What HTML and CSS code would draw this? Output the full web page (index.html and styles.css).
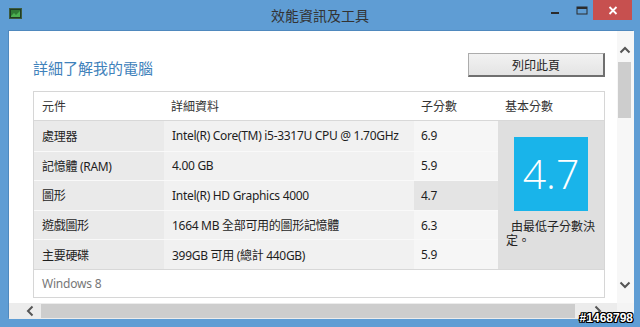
FILE: index.html
```html
<!DOCTYPE html>
<html lang="zh-Hant">
<head>
<meta charset="utf-8">
<title>效能資訊及工具</title>
<link rel="stylesheet" href="styles.css">
</head>
<body>
<div class="window">
  <header class="titlebar">
    <div class="app-icon">
      <svg width="13" height="11" viewBox="0 0 13 11"><rect x="0.5" y="0.5" width="12" height="10" fill="#1f3d23" stroke="#3c5a3e"/><rect x="2" y="2" width="9" height="7" fill="#2f7a34"/><path d="M2 8 L5 5 L7 7 L11 3 L11 9 L2 9 Z" fill="#4caf50"/></svg>
    </div>
    <div class="title">效能資訊及工具</div>
    <div class="controls">
      <div class="ctl ctl-min"><svg width="10" height="4" viewBox="0 0 10 4"><rect x="1" y="1" width="8" height="2" fill="#2b2b2b"/></svg></div>
      <div class="ctl ctl-max"><svg width="12" height="9" viewBox="0 0 12 9"><rect x="1" y="1" width="10" height="7" fill="none" stroke="#2b2b2b" stroke-width="1"/><rect x="1" y="1" width="10" height="2" fill="#2b2b2b"/></svg></div>
      <div class="ctl ctl-close"><svg width="10" height="9" viewBox="0 0 10 9"><path d="M1.5 1 L8.5 8 M8.5 1 L1.5 8" stroke="#fff" stroke-width="1.8"/></svg></div>
    </div>
  </header>
  <div class="client">
    <main class="page">
      <div class="page-head">
        <h1 class="heading">詳細了解我的電腦</h1>
        <button class="print-btn" type="button">列印此頁</button>
      </div>
      <section class="score-table">
        <div class="thead">
          <div class="th">元件</div>
          <div class="th">詳細資料</div>
          <div class="th">子分數</div>
          <div class="th">基本分數</div>
        </div>
        <div class="tbody">
          <div class="c1 r1">處理器</div>
          <div class="c2 r1">Intel(R) Core(TM) i5-3317U CPU @ 1.70GHz</div>
          <div class="c3 r1">6.9</div>
          <div class="c1 r2">記憶體 (RAM)</div>
          <div class="c2 r2">4.00 GB</div>
          <div class="c3 r2">5.9</div>
          <div class="c1 r3">圖形</div>
          <div class="c2 r3">Intel(R) HD Graphics 4000</div>
          <div class="c3 r3 lowest">4.7</div>
          <div class="c1 r4">遊戲圖形</div>
          <div class="c2 r4">1664 MB 全部可用的圖形記憶體</div>
          <div class="c3 r4">6.3</div>
          <div class="c1 r5">主要硬碟</div>
          <div class="c2 r5">399GB 可用 (總計 440GB)</div>
          <div class="c3 r5">5.9</div>
          <div class="base">
            <div class="base-score">4.7</div>
            <p class="base-note">由最低子分數決定。</p>
          </div>
        </div>
        <div class="tfoot">Windows 8</div>
      </section>
    </main>
    <div class="vscroll">
      <svg class="arrow-up" width="12" height="8" viewBox="0 0 12 8"><path d="M1.5 6.5 L6 2 L10.5 6.5" fill="none" stroke="#555" stroke-width="2"/></svg>
      <div class="vthumb"></div>
      <div class="vtrack"></div>
      <svg class="arrow-down" width="12" height="8" viewBox="0 0 12 8"><path d="M1.5 1.5 L6 6 L10.5 1.5" fill="none" stroke="#555" stroke-width="2"/></svg>
    </div>
    <div class="hscroll">
      <svg class="arrow-left" width="8" height="12" viewBox="0 0 8 12"><path d="M6.5 1.5 L2 6 L6.5 10.5" fill="none" stroke="#555" stroke-width="2"/></svg>
      <div class="hthumb"></div>
      <svg class="arrow-right" width="8" height="12" viewBox="0 0 8 12"><path d="M1.5 1.5 L6 6 L1.5 10.5" fill="none" stroke="#555" stroke-width="2"/></svg>
    </div>
    <div class="corner"></div>
  </div>
</div>
<div class="watermark">#1468798</div>
</body>
</html>
```

FILE: styles.css
```css
* { box-sizing: border-box; }
html, body { margin: 0; padding: 0; }
body {
  width: 640px;
  height: 327px;
  overflow: hidden;
  background: #5f9dd4;
  font-family: "Noto Sans", "Noto Sans CJK TC", sans-serif;
  font-size: 12px;
  color: #222;
  position: relative;
}
.window {
  display: flex;
  flex-direction: column;
  height: 327px;
}
.titlebar {
  height: 30px;
  display: grid;
  grid-template-columns: 1fr auto 1fr;
  align-items: start;
}
.app-icon {
  padding: 8px 0 0 9px;
  line-height: 0;
}
.title {
  font-family: "Noto Sans CJK TC", sans-serif;
  font-size: 14px;
  line-height: 30px;
  color: #333;
}
.controls {
  display: flex;
  justify-content: flex-end;
  padding-right: 8px;
}
.ctl {
  height: 20px;
  display: flex;
  align-items: center;
  justify-content: center;
}
.ctl-min { width: 30px; padding-top: 6px; }
.ctl-max { width: 23px; }
.ctl-close { width: 39px; background: #c7504f; }

.client {
  margin: 0 7px 0 8px;
  height: 288px;
  background: #fff;
  display: grid;
  grid-template-columns: 608px 17px;
  grid-template-rows: 272px 16px;
  border-left: 1px solid #4f89be;
  border-top: 1px solid #4f89be;
}
.page {
  padding: 22px 12px 0 24px;
  overflow: hidden;
}
.page-head {
  display: flex;
  justify-content: space-between;
  align-items: flex-start;
  height: 24px;
  margin-bottom: 14px;
}
.heading {
  margin: 5px 0 0 0;
  font-family: "Noto Sans CJK TC", sans-serif;
  font-weight: 400;
  font-size: 15px;
  line-height: 20px;
  color: #3f82bb;
}
.print-btn {
  width: 137px;
  height: 24px;
  font-family: "Noto Sans CJK TC", sans-serif;
  font-size: 12px;
  color: #222;
  background: linear-gradient(#f2f2f2, #e4e4e4);
  border: 1px solid #acacac;
  border-right: 2px solid #6f6f6f;
  border-bottom: 2px solid #6f6f6f;
  padding: 0;
}

.score-table {
  width: 572px;
  border: 1px solid #d6d6d6;
}
.thead {
  display: grid;
  grid-template-columns: 130px 250px 84px 1fr;
  height: 29px;
  border-bottom: 1px solid #d8d8d8;
  background: #fff;
}
.th {
  padding-left: 7px;
  line-height: 28px;
  color: #333;
  font-family: "Noto Sans CJK TC", sans-serif;
}
.th:first-child { padding-left: 8px; }
.tbody {
  display: grid;
  grid-template-columns: 130px 250px 84px 1fr;
  grid-template-rows: repeat(5, 29.6px);
}
.tbody > .c1, .tbody > .c2, .tbody > .c3 {
  display: flex;
  align-items: center;
  padding-left: 8px;
  color: #1e1e1e;
  letter-spacing: -0.3px;
}
.tbody > .c3 { padding-left: 7px; }
.c1 { background: #eaeaea; }
.c2 { background: #f1f1f1; }
.c3 { background: #f6f6f6; }
.c3.lowest { background: #e4e4e4; }
.r2, .r3, .r4, .r5 { border-top: 1px solid #f9f9f9; }
.base {
  grid-column: 4;
  grid-row: 1 / span 5;
  background: #dfdfdf;
  padding: 16px 0 0 8px;
}
.base-score {
  width: 74px;
  height: 74px;
  margin-left: 8px;
  background: #19b4ea;
  color: #fff;
  font-family: "Open Sans", sans-serif;
  font-weight: 300;
  font-size: 41px;
  line-height: 72px;
  text-align: center;
}
.base-note {
  margin: 8px 0 0 0;
  width: 92px;
  text-indent: 5px;
  font-family: "Noto Sans CJK TC", sans-serif;
  font-size: 12px;
  line-height: 14px;
  color: #222;
}
.tfoot {
  height: 28px;
  line-height: 28px;
  padding-left: 8px;
  border-top: 1px solid #d8d8d8;
  color: #777;
  background: #fff;
  letter-spacing: -0.2px;
}

.vscroll {
  grid-column: 2;
  grid-row: 1;
  display: flex;
  flex-direction: column;
  align-items: center;
  background: #f7f7f7;
  padding: 15px 2px 14px 0;
}
.arrow-up { margin-bottom: 8px; }
.vthumb {
  width: 13px;
  height: 56px;
  background: #cdcdcd;
}
.vtrack { flex: 1; }
.hscroll {
  grid-column: 1;
  grid-row: 2;
  display: flex;
  align-items: center;
  background: #ececec;
  padding: 0 15px 0 17px;
}
.hthumb {
  flex: 1;
  height: 14px;
  margin: 0 19px 0 7px;
  background: #cdcdcd;
}
.corner {
  grid-column: 2;
  grid-row: 2;
  background: #f4f4f4;
}
.watermark {
  position: absolute;
  right: 7px;
  bottom: 3px;
  font-family: "Liberation Sans", sans-serif;
  font-weight: 700;
  font-size: 12px;
  line-height: 12px;
  color: #fff;
  text-shadow: 1px 0 0 #000, -1px 0 0 #000, 0 1px 0 #000, 0 -1px 0 #000, 1px 1px 0 #000, -1px -1px 0 #000, 1px -1px 0 #000, -1px 1px 0 #000;
}
```
